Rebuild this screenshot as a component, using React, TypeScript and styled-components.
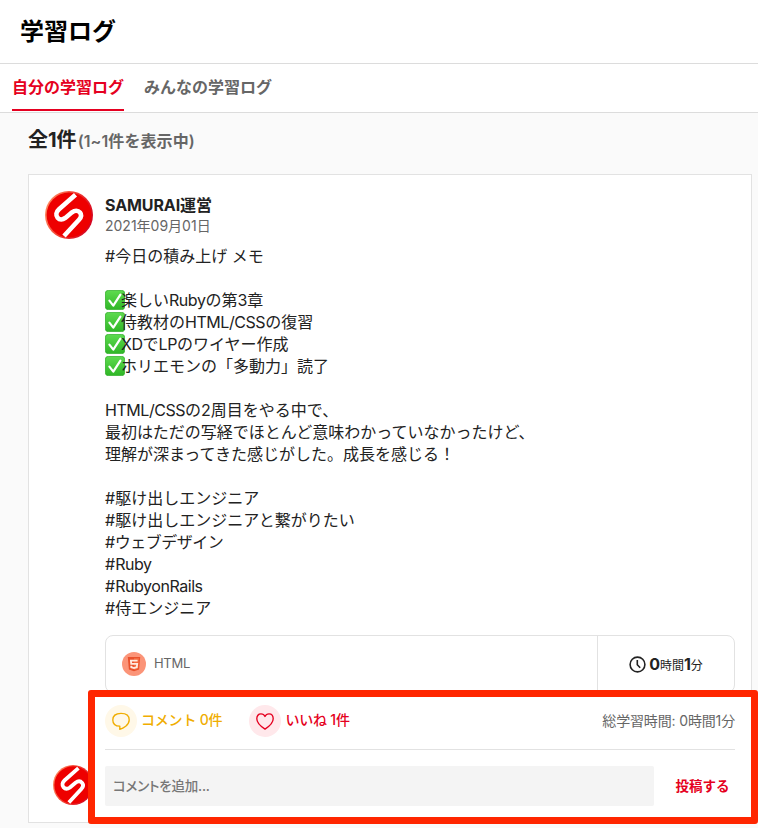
import React from "react";
import styled, { createGlobalStyle } from "styled-components";

const GlobalStyle = createGlobalStyle`
  *, *::before, *::after { box-sizing: border-box; }
  body {
    margin: 0;
    background: #fafafa;
    color: #222;
    font-family: Inter, "Noto Sans CJK JP", sans-serif;
    font-size: 16px;
    -webkit-font-smoothing: antialiased;
  }
  h1, h2, p { margin: 0; }
  button, input { font: inherit; border: 0; padding: 0; background: none; }
`;

const Page = styled.div`
  position: relative;
  height: 828px;
  overflow: hidden;
`;

const Header = styled.header`
  display: flex;
  align-items: center;
  height: 64px;
  padding: 0 20px;
  background: #fff;
  border-bottom: 1px solid #dcdcdc;
`;

const Title = styled.h1`
  font-size: 24px;
  line-height: 36px;
  font-weight: 700;
  color: #000;
`;

const Tabs = styled.nav`
  display: flex;
  gap: 20px;
  height: 49px;
  padding: 0 12px;
  background: #fff;
  border-bottom: 1px solid #dcdcdc;
`;

const Tab = styled.button<{ $active?: boolean }>`
  height: 47px;
  padding-bottom: ${(p) => (p.$active ? 0 : 2)}px;
  border-bottom: ${(p) => (p.$active ? "2px solid #e50020" : "0")};
  color: ${(p) => (p.$active ? "#e50020" : "#666")};
  font-size: 16px;
  line-height: 24px;
  font-weight: 700;
`;

const Main = styled.main`
  padding: 13px 6px 0 28px;
`;

const Count = styled.h2`
  height: 28px;
  font-size: 20px;
  line-height: 28px;
  font-weight: 700;
`;

const Range = styled.span`
  margin-left: 1px;
  font-size: 16px;
  font-weight: 600;
  color: #666;
  letter-spacing: 0.1px;
`;

const Card = styled.article`
  height: 649px;
  margin-top: 20px;
  padding: 16px;
  background: #fff;
  border: 1px solid #e2e2e2;
`;

const Post = styled.div`
  display: grid;
  grid-template-columns: 48px 1fr;
  column-gap: 12px;
`;

const Author = styled.p`
  height: 24px;
  padding-top: 2px;
  line-height: 24px;
  font-weight: 700;
  letter-spacing: -0.1px;
`;

const PostDate = styled.p`
  height: 20px;
  padding-top: 1px;
  font-size: 14px;
  line-height: 20px;
  color: #666;
`;

const Body = styled.div`
  margin-top: 10px;
`;

const Line = styled.p<{ $track?: number }>`
  display: flex;
  align-items: center;
  height: 22px;
  line-height: 22px;
  white-space: pre;
  letter-spacing: ${(p) => p.$track ?? 0}px;
`;

const Check = styled.svg`
  flex: none;
  width: 20px;
  height: 20px;
  margin-right: -4px;
`;

const LineText = styled.span`
  position: relative;
`;

const Latin = styled.span`
  letter-spacing: -0.45px;
`;

const Study = styled.div`
  display: flex;
  height: 58px;
  margin-top: 16px;
  border: 1px solid #e2e2e2;
  border-radius: 8px;
`;

const Language = styled.div`
  display: flex;
  flex: 1;
  align-items: center;
  gap: 8px;
  padding-left: 16px;
  font-size: 13px;
  letter-spacing: -0.3px;
  color: #666;
`;

const LanguageName = styled.span`
  padding-bottom: 2px;
`;

const Duration = styled.div`
  display: flex;
  align-items: center;
  justify-content: center;
  width: 137px;
  border-left: 1px solid #e2e2e2;
  font-size: 12px;
  line-height: 20px;
  white-space: nowrap;

  svg { margin-right: 3px; }
  span { padding-top: 2px; }
  b { font-size: 16px; }
`;

const Actions = styled.div`
  display: flex;
  align-items: center;
  height: 45px;
  padding-bottom: 12px;
  margin: 12px 0 16px;
  border-bottom: 1px solid #e2e2e2;
`;

const Action = styled.button<{ $color: string }>`
  display: flex;
  align-items: center;
  gap: 4px;
  margin-right: 27px;
  color: ${(p) => p.$color};
  font-size: 14px;
  font-weight: 500;
  line-height: 20px;
  letter-spacing: -0.2px;
  white-space: nowrap;
`;

const ActionIcon = styled.span<{ $bg: string }>`
  display: flex;
  align-items: center;
  justify-content: center;
  width: 32px;
  height: 32px;
  border-radius: 50%;
  background: ${(p) => p.$bg};
`;

const ActionLabel = styled.span`
  padding-bottom: 2px;
`;

const Total = styled.span`
  margin-left: auto;
  padding-bottom: 2px;
  color: #666;
  font-size: 14px;
  letter-spacing: -0.15px;
`;

const CommentForm = styled.div`
  display: flex;
  align-items: center;
  height: 40px;
  padding-left: 8px;

  svg { margin-bottom: 2px; }
`;

const CommentInput = styled.input`
  flex: 1;
  height: 40px;
  margin-left: 12px;
  padding: 0 8px;
  border-radius: 2px;
  background: #f4f4f4;
  font-size: 13.5px;
  font-weight: 500;
  letter-spacing: -0.2px;
  &::placeholder { color: #777; opacity: 1; font-feature-settings: "palt"; }
`;

const Submit = styled.button`
  width: 81px;
  padding: 0 0 2px 16px;
  color: #e50020;
  font-size: 13.5px;
  font-weight: 700;
`;

const Highlight = styled.div`
  position: absolute;
  left: 88px;
  top: 690px;
  width: 670px;
  height: 134px;
  border: 7px solid #ff2600;
  border-radius: 3px;
  pointer-events: none;
`;

const Avatar = ({ size }: { size: number }) => (
  <svg width={size} height={size} viewBox="0 0 48 48">
    <defs>
      <linearGradient id={`rim${size}`} x1="0" y1="0.3" x2="1" y2="0.7">
        <stop offset="0" stopColor="#ff8a60" />
        <stop offset="0.5" stopColor="#f03a30" />
        <stop offset="1" stopColor="#d00020" />
      </linearGradient>
    </defs>
    <circle cx="24" cy="24" r="24" fill={`url(#rim${size})`} />
    <circle cx="24" cy="24" r="22.4" fill="#ee0000" />
    <path
      d="M30.5 3.8 14 18.3C11 21 10.6 24.3 12.6 26.7C14.6 29 17.6 28.9 20.3 26.9L27 21.3C29.8 19.2 33 19.2 35 21.5C36.9 23.9 36.3 26.3 34 28.8L19 45"
      fill="none"
      stroke="#fff"
      strokeWidth="4.6"
    />
  </svg>
);

const CheckMark = () => (
  <Check viewBox="0 0 20 20">
    <defs>
      <linearGradient id="green" x1="0" y1="0" x2="0" y2="1">
        <stop offset="0" stopColor="#5edb4f" />
        <stop offset="1" stopColor="#2fb626" />
      </linearGradient>
    </defs>
    <rect x="0.4" y="0.4" width="19.2" height="19.2" rx="2.8" fill="url(#green)" stroke="#31ad2a" strokeWidth="0.8" />
    <path d="M4.4 10.6 8.3 15.6 15.4 4.7" fill="none" stroke="#fff" strokeWidth="2.2" strokeLinecap="round" strokeLinejoin="round" />
  </Check>
);

const HtmlIcon = () => (
  <svg width="24" height="24" viewBox="0 0 24 24">
    <circle cx="12" cy="12" r="12" fill="#fb9478" />
    <path d="M5.8 5h12.4l-1.1 12.5L12 19.2l-5.1-1.7z" fill="#e9502b" />
    <path d="M12 6v12.1l4.2-1.3L17.1 6z" fill="#f4683d" />
    <path d="M15.6 8.6H8.9l.3 3.2h6l-.4 3.4-2.8.8-2.7-.8-.1-1.4" fill="none" stroke="#ffe9e0" strokeWidth="1.8" />
  </svg>
);

const ClockIcon = () => (
  <svg width="17" height="17" viewBox="0 0 17 17" fill="none" stroke="#222" strokeWidth="1.6">
    <circle cx="8.5" cy="8.5" r="7.4" />
    <path d="M8.3 4v4.8l2.9 3" />
  </svg>
);

const BubbleIcon = () => (
  <svg width="20" height="20" viewBox="0 0 20 20" fill="none" stroke="#f0ad00" strokeWidth="1.35" strokeLinejoin="round">
    <path d="M8.8 15.2C4.4 15 1.8 12.4 1.8 8.9C1.8 5 4.7 2.4 10 2.4S18.2 5 18.2 8.9C18.2 11.3 17 13.2 14.7 15.2C13.2 16.4 11 17.7 8.8 18.3Z" />
  </svg>
);

const HeartIcon = () => (
  <svg width="20" height="20" viewBox="0 0 20 20" fill="none" stroke="#e50020" strokeWidth="1.35" strokeLinejoin="round">
    <path d="M10 18.1C7 16.2 1.8 12.6 1.8 7.8C1.8 4.8 3.6 2.9 6 2.9C7.8 2.9 9.3 3.9 10 5.5C10.7 3.9 12.2 2.9 14 2.9C16.4 2.9 18.2 4.8 18.2 7.8C18.2 12.6 13 16.2 10 18.1Z" />
  </svg>
);

type PostLine = { text: string; done?: boolean; track?: number };

const lines: PostLine[] = [
  { text: "#今日の積み上げ メモ" },
  { text: "" },
  { text: "楽しいRubyの第3章", done: true },
  { text: "侍教材のHTML/CSSの復習", done: true },
  { text: "XDでLPのワイヤー作成", done: true },
  { text: "ホリエモンの「多動力」読了", done: true },
  { text: "" },
  { text: "HTML/CSSの2周目をやる中で、" },
  { text: "最初はただの写経でほとんど意味わかっていなかったけど、" },
  { text: "理解が深まってきた感じがした。成長を感じる！" },
  { text: "" },
  { text: "#駆け出しエンジニア" },
  { text: "#駆け出しエンジニアと繋がりたい" },
  { text: "#ウェブデザイン", track: -0.5 },
  { text: "#Ruby" },
  { text: "#RubyonRails" },
  { text: "#侍エンジニア" },
];

/* Latin runs are set a little tighter than the Japanese around them. */
const mixed = (text: string) =>
  text
    .split(/([A-Za-z/]+)/)
    .map((run, i) => (i % 2 ? <Latin key={i}>{run}</Latin> : run));

export default function App() {
  return (
    <Page lang="ja">
      <GlobalStyle />
      <Header>
        <Title>学習ログ</Title>
      </Header>
      <Tabs>
        <Tab $active>自分の学習ログ</Tab>
        <Tab>みんなの学習ログ</Tab>
      </Tabs>
      <Main>
        <Count>
          全1件<Range>(1~1件を表示中)</Range>
        </Count>
        <Card>
          <Post>
            <Avatar size={48} />
            <div>
              <Author>SAMURAI運営</Author>
              <PostDate>2021年09月01日</PostDate>
              <Body>
                {lines.map((line, i) => (
                  <Line key={i} $track={line.track}>
                    {line.done && <CheckMark />}
                    <LineText>{mixed(line.text)}</LineText>
                  </Line>
                ))}
              </Body>
              <Study>
                <Language>
                  <HtmlIcon />
                  <LanguageName>HTML</LanguageName>
                </Language>
                <Duration>
                  <ClockIcon />
                  <span>
                    <b>0</b>時間<b>1</b>分
                  </span>
                </Duration>
              </Study>
              <Actions>
                <Action $color="#f0ad00">
                  <ActionIcon $bg="#fff8e8">
                    <BubbleIcon />
                  </ActionIcon>
                  <ActionLabel>コメント 0件</ActionLabel>
                </Action>
                <Action $color="#e50020">
                  <ActionIcon $bg="#ffe8eb">
                    <HeartIcon />
                  </ActionIcon>
                  <ActionLabel>いいね 1件</ActionLabel>
                </Action>
                <Total>総学習時間: 0時間1分</Total>
              </Actions>
            </div>
          </Post>
          <CommentForm>
            <Avatar size={40} />
            <CommentInput placeholder="コメントを追加..." />
            <Submit>投稿する</Submit>
          </CommentForm>
        </Card>
      </Main>
      <Highlight />
    </Page>
  );
}
